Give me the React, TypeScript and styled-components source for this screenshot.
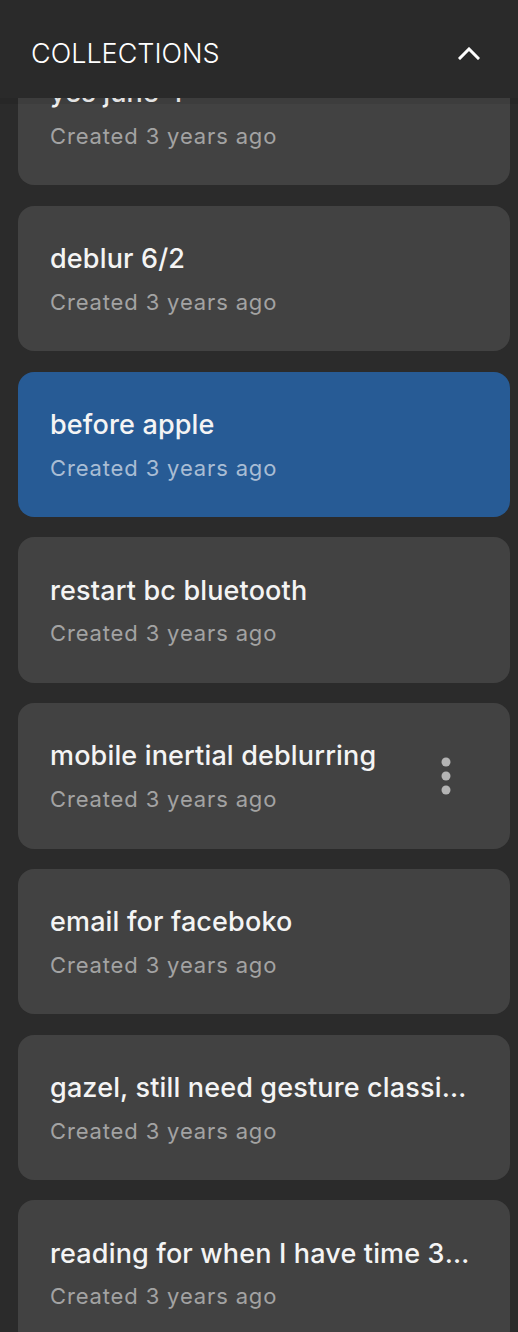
import { useLayoutEffect, useRef } from 'react'
import styled, { createGlobalStyle } from 'styled-components'

interface Collection {
	id: number
	title: string
	created: string
}

const collections: Collection[] = [
	{ id: 1, title: 'yes june 4', created: 'Created 3 years ago' },
	{ id: 2, title: 'deblur 6/2', created: 'Created 3 years ago' },
	{ id: 3, title: 'before apple', created: 'Created 3 years ago' },
	{ id: 4, title: 'restart bc bluetooth', created: 'Created 3 years ago' },
	{ id: 5, title: 'mobile inertial deblurring', created: 'Created 3 years ago' },
	{ id: 6, title: 'email for faceboko', created: 'Created 3 years ago' },
	{ id: 7, title: 'gazel, still need gesture classifier', created: 'Created 3 years ago' },
	{ id: 8, title: 'reading for when I have time 3/22', created: 'Created 3 years ago' },
	{ id: 9, title: 'notes', created: 'Created 3 years ago' },
]

const SELECTED_ID = 3
const HOVER_ID = 5

const App = () => {
	const listRef = useRef<HTMLDivElement>(null)

	// the list is shown scrolled a little, first card half under the header
	useLayoutEffect(() => {
		if (listRef.current) listRef.current.scrollTop = 78
	}, [])

	return (
		<>
			<GlobalStyles />
			<Panel>
				<Header>
					<Heading>COLLECTIONS</Heading>
					<Toggle aria-label="Collapse">
						<svg width="22" height="13" viewBox="0 0 22 13" fill="none">
							<path
								d="M2 11 L11 2 L20 11"
								stroke="#ffffff"
								strokeWidth="3"
								strokeLinecap="square"
								strokeLinejoin="miter"
							/>
						</svg>
					</Toggle>
				</Header>
				<List ref={listRef}>
					{collections.map((c) => (
						<Card key={c.id} $selected={c.id === SELECTED_ID}>
							<Title>{c.title}</Title>
							<Created $selected={c.id === SELECTED_ID}>{c.created}</Created>
							{c.id === HOVER_ID ? (
								<MenuButton aria-label="More">
									<svg width="10" height="38" viewBox="0 0 10 38">
										<circle cx="5" cy="5" r="4.5" fill="#b4b4b4" />
										<circle cx="5" cy="19" r="4.5" fill="#b4b4b4" />
										<circle cx="5" cy="33" r="4.5" fill="#b4b4b4" />
									</svg>
								</MenuButton>
							) : null}
						</Card>
					))}
				</List>
			</Panel>
		</>
	)
}

const GlobalStyles = createGlobalStyle`
	html, body {
		margin: 0;
		padding: 0;
		background: #2b2b2b;
	}
	body {
		font-family: Inter, 'Noto Sans', sans-serif;
		-webkit-font-smoothing: antialiased;
	}
`

const Panel = styled.div`
	height: 100vh;
	display: flex;
	flex-direction: column;
	background: #2b2b2b;
	overflow: hidden;
`
const Header = styled.header`
	flex: 0 0 98px;
	position: relative;
	z-index: 2;
	display: flex;
	align-items: center;
	justify-content: space-between;
	padding: 9px 38px 0 31px;
	box-sizing: border-box;
	background: #2a2a2a;
	box-shadow: 0 6px 0 rgba(0, 0, 0, 0.07);
`
const Heading = styled.h2`
	margin: 0;
	font-size: 27px;
	font-weight: 300;
	color: #ffffff;
	letter-spacing: 0;
`
const Toggle = styled.button`
	display: flex;
	align-items: center;
	justify-content: center;
	padding: 0;
	border: none;
	background: none;
	cursor: pointer;
`
const List = styled.div`
	flex: 1 1 auto;
	min-height: 0;
	overflow-y: auto;
	scrollbar-width: none;
	padding: 20px 8px 0 18px;
	display: flex;
	flex-direction: column;
	gap: 20.3px;
`
const Card = styled.div<{ $selected: boolean }>`
	position: relative;
	flex: 0 0 auto;
	display: flex;
	flex-direction: column;
	gap: 13.8px;
	padding: 37.2px 32px 36.5px 32px;
	border-radius: 16px;
	background: ${({ $selected }) => ($selected ? '#275b95' : '#424242')};
	cursor: pointer;
`
const Title = styled.div`
	padding-right: 6px;
	font-size: 27px;
	line-height: 32px;
	font-weight: 500;
	letter-spacing: 0.15px;
	color: #f4f4f4;
	white-space: nowrap;
	overflow: hidden;
	text-overflow: ellipsis;
`
const Created = styled.div<{ $selected: boolean }>`
	font-size: 22px;
	line-height: 26px;
	font-weight: 400;
	letter-spacing: 0.85px;
	color: ${({ $selected }) => ($selected ? '#a9bdd4' : '#a3a3a3')};
`
const MenuButton = styled.button`
	position: absolute;
	top: 50%;
	right: 55px;
	transform: translateY(-50%);
	display: flex;
	padding: 6px 4px;
	border: none;
	background: none;
	cursor: pointer;
`

export default App
